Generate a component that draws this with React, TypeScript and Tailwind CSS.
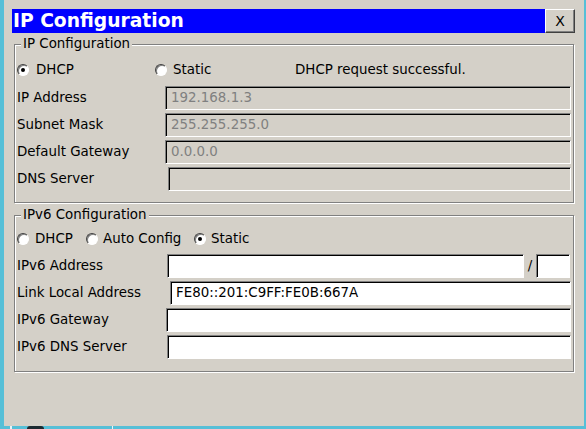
import React from "react";

const FONT = { fontFamily: '"DejaVu Sans", "Liberation Sans", sans-serif' };

function Radio({ checked }: { checked?: boolean }) {
  return (
    <span className="relative flex h-[12px] w-[12px] shrink-0 items-center justify-center rounded-full border border-t-[#404040] border-l-[#404040] border-r-white border-b-white bg-white shadow-[inset_1px_1px_0_#808080]">
      {checked && <span className="h-[4px] w-[4px] rounded-full bg-black" />}
    </span>
  );
}

function Field({
  left,
  right = 571,
  value,
  disabled,
}: {
  left: number;
  right?: number;
  value?: string;
  disabled?: boolean;
}) {
  return (
    <div
      className={`flex h-[24px] items-center border border-t-[#808080] border-l-[#808080] border-r-white border-b-white pl-[5px] text-[13.4px] shadow-[inset_1px_1px_0_#000] ${
        disabled ? "bg-[#d4d0c8] text-[#808080]" : "bg-white text-black"
      }`}
      style={{ width: right - left }}
    >
      {value}
    </div>
  );
}

function Row({
  label,
  left,
  children,
}: {
  label: string;
  left: number;
  children: React.ReactNode;
}) {
  return (
    <div className="flex h-[24px] items-center">
      <span className="shrink-0 text-[13.4px] text-black" style={{ width: left - 17 }}>
        {label}
      </span>
      {children}
    </div>
  );
}

function Group({
  title,
  height,
  children,
}: {
  title: string;
  height: number;
  children: React.ReactNode;
}) {
  return (
    <div
      className="relative ml-[10px] w-[560px] border border-[#808080] shadow-[inset_1px_1px_0_#fff,1px_1px_0_#fff]"
      style={{ height }}
    >
      <span className="absolute left-[6px] top-[-9px] bg-[#d4d0c8] px-[2px] text-[13.4px] leading-[16px] text-black">
        {title}
      </span>
      {children}
    </div>
  );
}

export default function App() {
  return (
    <div className="relative flex h-[429px] w-[586px] overflow-hidden bg-[#56bfd7]" style={FONT}>
      <div className="w-[4px] shrink-0" />
      <div className="flex h-[426px] w-[580px] shrink-0 flex-col bg-[#d4d0c8]">
        {/* title bar */}
        <div className="ml-[8px] mt-[9px] flex h-[24px]">
          <div className="flex w-[533px] items-center bg-[#0000ff] pl-[1px] text-[18.7px] font-bold leading-none text-white">
            IP Configuration
          </div>
          <button className="flex w-[30px] items-center justify-center border border-t-white border-l-white border-r-[#404040] border-b-[#404040] bg-[#d4d0c8] text-[14px] text-black shadow-[inset_-1px_-1px_0_#808080]">
            X
          </button>
        </div>

        {/* IPv4 */}
        <div className="mt-[11px]">
          <Group title="IP Configuration" height={159}>
            <div className="flex flex-col pl-[2px] pt-[16px]">
              <div className="flex h-[18px] items-center text-[13.4px] text-black">
                <Radio checked />
                <span className="ml-[7px] w-[119px]">DHCP</span>
                <Radio />
                <span className="ml-[6px] w-[122px]">Static</span>
                <span>DHCP request successful.</span>
              </div>
              <div className="mt-[7px] flex flex-col gap-[3px]">
                <Row label="IP Address" left={165}>
                  <Field left={165} value="192.168.1.3" disabled />
                </Row>
                <Row label="Subnet Mask" left={165}>
                  <Field left={165} value="255.255.255.0" disabled />
                </Row>
                <Row label="Default Gateway" left={165}>
                  <Field left={165} value="0.0.0.0" disabled />
                </Row>
                <Row label="DNS Server" left={168}>
                  <Field left={168} disabled />
                </Row>
              </div>
            </div>
          </Group>
        </div>

        {/* IPv6 */}
        <div className="mt-[12px]">
          <Group title="IPv6 Configuration" height={157}>
            <div className="flex flex-col pl-[2px] pt-[14px]">
              <div className="flex h-[18px] items-center text-[13.4px] text-black">
                <Radio />
                <span className="ml-[6px] w-[51px]">DHCP</span>
                <Radio />
                <span className="ml-[5px] w-[91px]">Auto Config</span>
                <Radio checked />
                <span className="ml-[5px]">Static</span>
              </div>
              <div className="mt-[6px] flex flex-col gap-[3px]">
                <Row label="IPv6 Address" left={167}>
                  <Field left={167} right={524} />
                  <span className="w-[12px] text-center text-[13.4px] text-black">/</span>
                  <Field left={536} right={570} />
                </Row>
                <Row label="Link Local Address" left={170}>
                  <Field left={170} value="FE80::201:C9FF:FE0B:667A" />
                </Row>
                <Row label="IPv6 Gateway" left={166}>
                  <Field left={166} />
                </Row>
                <Row label="IPv6 DNS Server" left={167}>
                  <Field left={167} />
                </Row>
              </div>
            </div>
          </Group>
        </div>
      </div>
      {/* desktop bits below the window */}
      <div className="absolute bottom-0 left-[10px] h-[3px] w-[2px] bg-[#e8f4f8]" />
      <div className="absolute bottom-0 left-[27px] h-[3px] w-[17px] rounded-t-full bg-[#1b2a30]" />
      <div className="absolute bottom-0 left-[112px] h-[3px] w-[1px] bg-[#e8f4f8]" />
    </div>
  );
}
